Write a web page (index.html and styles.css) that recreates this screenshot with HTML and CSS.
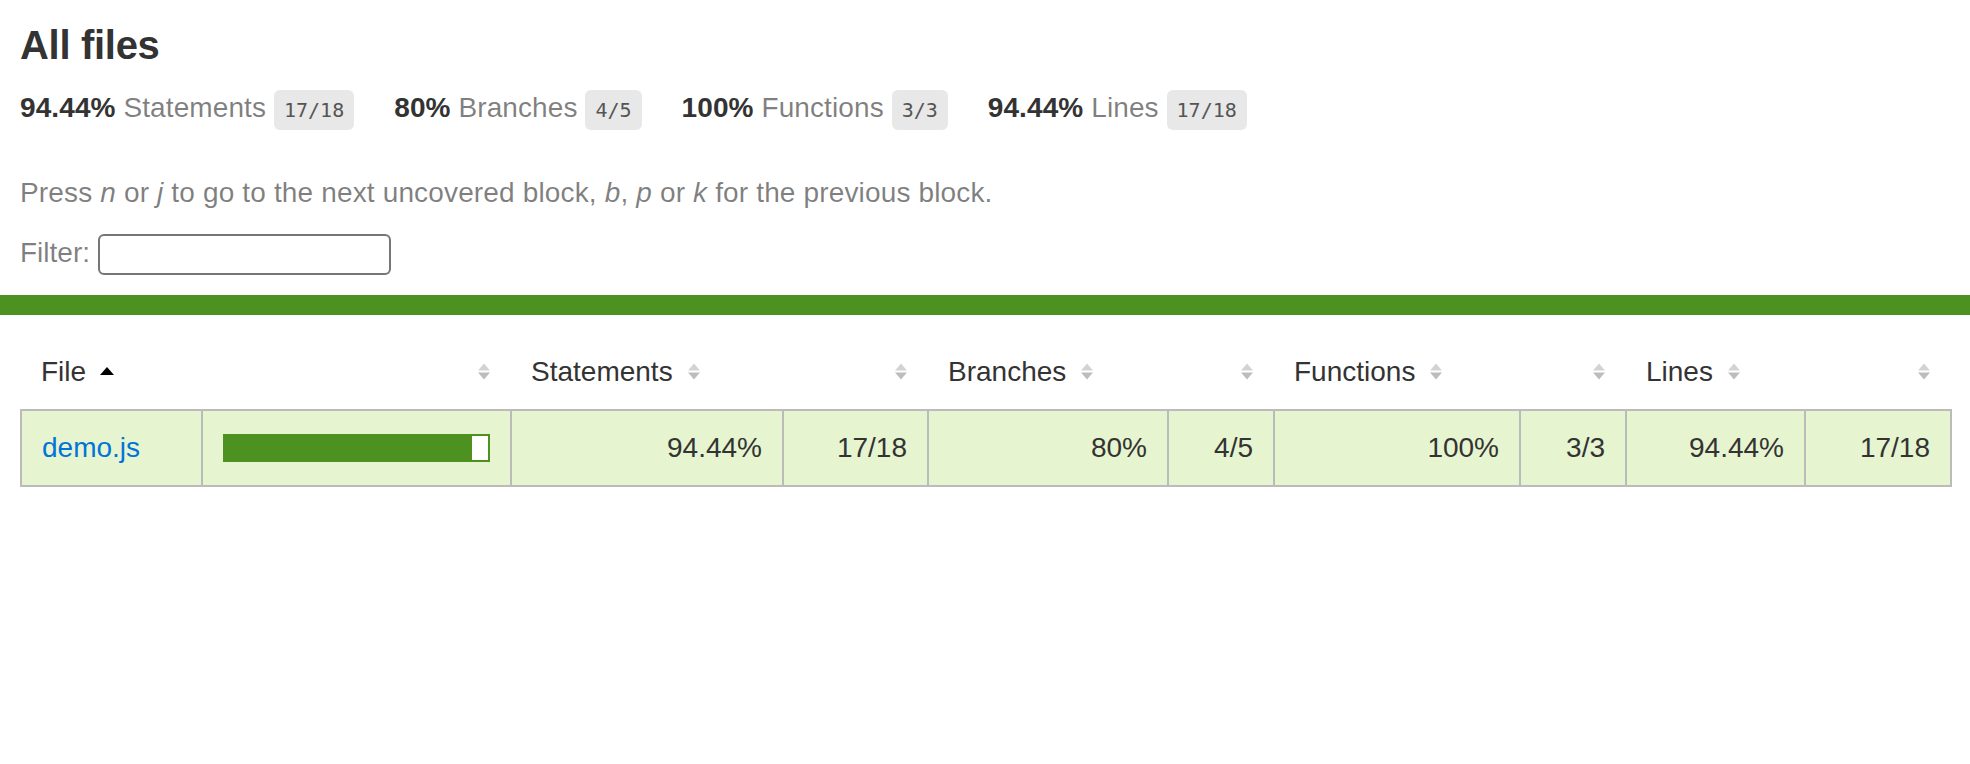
FILE: index.html
```html
<!DOCTYPE html>
<html lang="en">
<head>
<meta charset="utf-8">
<title>Code coverage report for All files</title>
<link rel="stylesheet" href="styles.css">
</head>
<body>
<div class="wrapper">
  <div class="pad1">
    <h1>All files</h1>
    <div class="stats">
      <div class="stat"><span class="strong">94.44% </span><span class="quiet">Statements</span> <span class="fraction">17/18</span></div>
      <div class="stat"><span class="strong">80% </span><span class="quiet">Branches</span> <span class="fraction">4/5</span></div>
      <div class="stat"><span class="strong">100% </span><span class="quiet">Functions</span> <span class="fraction">3/3</span></div>
      <div class="stat"><span class="strong">94.44% </span><span class="quiet">Lines</span> <span class="fraction">17/18</span></div>
    </div>
    <p class="quiet hint">Press <em>n</em> or <em>j</em> to go to the next uncovered block, <em>b</em>, <em>p</em> or <em>k</em> for the previous block.</p>
    <div class="quiet filter">Filter: <input type="search" class="search" aria-label="Filter"></div>
  </div>
  <div class="status-line high"></div>
  <div class="pad1">
    <table class="coverage-summary">
      <colgroup>
        <col class="w-file"><col class="w-pic"><col class="w-spct"><col class="w-sabs"><col class="w-bpct"><col class="w-babs"><col class="w-fpct"><col class="w-fabs"><col class="w-lpct"><col class="w-labs">
      </colgroup>
      <thead>
        <tr>
          <th class="file">File<svg class="sorter" viewBox="0 0 14 20"><path d="M0 14 L7 6 L14 14 Z" fill="#000"/></svg></th>
          <th class="pic"><svg class="sorter" viewBox="0 0 14 20"><path d="M1 9.6 L7 2.5 L13 9.6 Z" fill="#d3d3d3"/><path d="M1 11.4 L7 18.5 L13 11.4 Z" fill="#bdbdbd"/></svg></th>
          <th class="pct">Statements<svg class="sorter" viewBox="0 0 14 20"><path d="M1 9.6 L7 2.5 L13 9.6 Z" fill="#d3d3d3"/><path d="M1 11.4 L7 18.5 L13 11.4 Z" fill="#bdbdbd"/></svg></th>
          <th class="abs"><svg class="sorter" viewBox="0 0 14 20"><path d="M1 9.6 L7 2.5 L13 9.6 Z" fill="#d3d3d3"/><path d="M1 11.4 L7 18.5 L13 11.4 Z" fill="#bdbdbd"/></svg></th>
          <th class="pct">Branches<svg class="sorter" viewBox="0 0 14 20"><path d="M1 9.6 L7 2.5 L13 9.6 Z" fill="#d3d3d3"/><path d="M1 11.4 L7 18.5 L13 11.4 Z" fill="#bdbdbd"/></svg></th>
          <th class="abs"><svg class="sorter" viewBox="0 0 14 20"><path d="M1 9.6 L7 2.5 L13 9.6 Z" fill="#d3d3d3"/><path d="M1 11.4 L7 18.5 L13 11.4 Z" fill="#bdbdbd"/></svg></th>
          <th class="pct">Functions<svg class="sorter" viewBox="0 0 14 20"><path d="M1 9.6 L7 2.5 L13 9.6 Z" fill="#d3d3d3"/><path d="M1 11.4 L7 18.5 L13 11.4 Z" fill="#bdbdbd"/></svg></th>
          <th class="abs"><svg class="sorter" viewBox="0 0 14 20"><path d="M1 9.6 L7 2.5 L13 9.6 Z" fill="#d3d3d3"/><path d="M1 11.4 L7 18.5 L13 11.4 Z" fill="#bdbdbd"/></svg></th>
          <th class="pct">Lines<svg class="sorter" viewBox="0 0 14 20"><path d="M1 9.6 L7 2.5 L13 9.6 Z" fill="#d3d3d3"/><path d="M1 11.4 L7 18.5 L13 11.4 Z" fill="#bdbdbd"/></svg></th>
          <th class="abs"><svg class="sorter" viewBox="0 0 14 20"><path d="M1 9.6 L7 2.5 L13 9.6 Z" fill="#d3d3d3"/><path d="M1 11.4 L7 18.5 L13 11.4 Z" fill="#bdbdbd"/></svg></th>
        </tr>
      </thead>
      <tbody>
        <tr>
          <td class="file high"><a href="#">demo.js</a></td>
          <td class="pic high"><div class="chart"><div class="cover-fill" style="width: 94%"></div><div class="cover-empty" style="width: 6%"></div></div></td>
          <td class="pct high">94.44%</td>
          <td class="abs high">17/18</td>
          <td class="pct high">80%</td>
          <td class="abs high">4/5</td>
          <td class="pct high">100%</td>
          <td class="abs high">3/3</td>
          <td class="pct high">94.44%</td>
          <td class="abs high">17/18</td>
        </tr>
      </tbody>
    </table>
  </div>
</div>
</body>
</html>
```

FILE: styles.css
```css
* { box-sizing: border-box; }
html, body { margin: 0; padding: 0; }
body {
  font-family: "Liberation Sans", Arial, Helvetica, sans-serif;
  font-size: 28px;
  line-height: 1.2;
  color: #333;
  background: #fff;
}
a { color: #0074D9; text-decoration: none; }
.pad1 { padding: 20px; }
h1 { font-size: 40px; line-height: 50px; margin: 0; font-weight: bold; letter-spacing: -0.3px; }
.stats { display: flex; flex-wrap: wrap; column-gap: 40px; padding: 20px 0; line-height: 36px; }
.stat { letter-spacing: 0.1px; }
.strong { font-weight: bold; }
.quiet { color: rgba(0, 0, 0, 0.5); }
.fraction {
  font-family: "DejaVu Sans Mono", "Liberation Mono", monospace;
  font-size: 20px;
  letter-spacing: 0;
  color: #555;
  background: #e8e8e8;
  padding: 8px 10px;
  border-radius: 6px;
  vertical-align: middle;
}
.hint { margin: 28px 0 25px; letter-spacing: 0.15px; }
.filter { height: 41px; }
.search {
  width: 293px;
  height: 41px;
  border: 2px solid #767676;
  border-radius: 6px;
  vertical-align: middle;
  font-size: 26px;
  padding: 2px 8px;
  background: #fff;
}
.status-line { height: 20px; }
.status-line.high { background: rgb(77, 146, 33); }

.coverage-summary { border-collapse: collapse; width: 100%; table-layout: fixed; line-height: 34px; }
.w-file { width: 181px; }
.w-pic { width: 309px; }
.w-spct { width: 272px; }
.w-sabs { width: 145px; }
.w-bpct { width: 240px; }
.w-babs { width: 106px; }
.w-fpct { width: 246px; }
.w-fabs { width: 106px; }
.w-lpct { width: 179px; }
.w-labs { width: 146px; }
.coverage-summary tr { border-bottom: 2px solid #bbb; }
.coverage-summary tbody { border: 2px solid #bbb; }
.coverage-summary td, .coverage-summary th { padding: 20px; }
.coverage-summary td { border-right: 2px solid #bbb; white-space: nowrap; }
.coverage-summary td:last-child { border-right: none; }
.coverage-summary th { text-align: left; font-weight: normal; white-space: nowrap; }
.coverage-summary th.pic, .coverage-summary th.abs,
.coverage-summary td.pct, .coverage-summary td.abs { text-align: right; }
.sorter { width: 14px; height: 20px; display: inline-block; margin-left: 14px; }
.high { background: rgb(230, 245, 208); }
.chart { line-height: 0; border: 2px solid rgb(77, 146, 33); }
.cover-fill, .cover-empty { display: inline-block; height: 24px; }
.cover-fill { background: rgb(77, 146, 33); }
.cover-empty { background: #fff; }
```
